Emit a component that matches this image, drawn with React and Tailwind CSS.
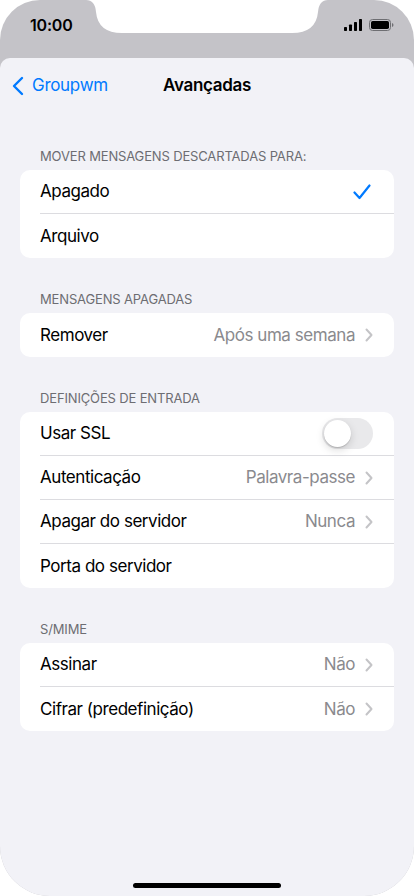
import React from "react";

const font = { fontFamily: "Inter, 'Noto Sans', sans-serif" };

function Chevron() {
  return (
    <svg width="8" height="14" viewBox="0 0 8 14" className="ml-[10px]">
      <path d="M1.5 1.5 L6.5 7 L1.5 12.5" fill="none" stroke="#c4c4c7" strokeWidth="2" strokeLinecap="round" strokeLinejoin="round" />
    </svg>
  );
}

function Row({ label, value, chevron, last, right }) {
  return (
    <div className="flex h-[44px] pl-[20px]">
      <div className={"flex flex-1 items-center pr-[21px] " + (last ? "" : "border-b border-[#dcdce0]")}>
        <span className="flex-1 text-[17px] text-black tracking-[-0.45px] pt-[1px]">{label}</span>
        {value && <span className="text-[17px] text-[#8a8a8e] tracking-[-0.45px] pt-[1px]">{value}</span>}
        {chevron && <Chevron />}
        {right}
      </div>
    </div>
  );
}

function Header({ children, first }) {
  return (
    <div className={(first ? "mt-[39px]" : "mt-[32px]") + " px-[40px] pb-[5px] text-[13px] leading-[18px] text-[#6d6d72] uppercase tracking-[-0.15px]"}>
      {children}
    </div>
  );
}

function Card({ children }) {
  return <div className="mx-[20px] bg-white rounded-[10px] overflow-hidden">{children}</div>;
}

export default function App() {
  return (
    <div className="w-[414px] h-[896px] bg-white overflow-hidden" style={font}>
      <div className="relative w-[414px] h-[896px] bg-[#c4c3c8] rounded-t-[40px] rounded-b-[50px] overflow-hidden flex flex-col">
        {/* notch */}
        <svg className="absolute top-0 left-0" width="414" height="40" viewBox="0 0 414 40">
          <path d="M86 0 Q95 0 96 12 Q98 33 122 33 L292 33 Q316 33 318 12 Q319 0 328 0 Z" fill="#ffffff" />
        </svg>
        {/* status bar */}
        <div className="h-[58px] flex items-start justify-between px-[30px] pt-[14px] shrink-0">
          <span className="text-[16px] font-semibold text-black tracking-[-0.2px] leading-[22px]">10:00</span>
          <div className="flex items-center gap-[7px] mt-[5px] mr-[-10px]">
            <svg width="18" height="12" viewBox="0 0 18 12">
              <rect x="0" y="8" width="3" height="4" rx="0.7" fill="#000" />
              <rect x="5" y="5.5" width="3" height="6.5" rx="0.7" fill="#000" />
              <rect x="10" y="3" width="3" height="9" rx="0.7" fill="#000" />
              <rect x="15" y="0" width="3" height="12" rx="0.7" fill="#000" />
            </svg>
            <svg width="25" height="12" viewBox="0 0 25 12">
              <rect x="0.5" y="0.5" width="21" height="11" rx="3" fill="none" stroke="#6e6e72" strokeWidth="1" />
              <rect x="2" y="2" width="18" height="8" rx="1.7" fill="#000" />
              <path d="M23 4 Q24.5 4.5 24.5 6 Q24.5 7.5 23 8 Z" fill="#6e6e72" />
            </svg>
          </div>
        </div>
        {/* sheet */}
        <div className="flex-1 bg-[#f2f2f7] rounded-t-[10px] pt-[6px] flex flex-col">
          <div className="relative h-[44px] flex items-center justify-center shrink-0">
            <div className="absolute left-[12px] top-0 h-[44px] flex items-center">
              <svg width="12" height="20" viewBox="0 0 12 20">
                <path d="M10 2 L2 10 L10 18" fill="none" stroke="#007aff" strokeWidth="2.4" strokeLinecap="round" strokeLinejoin="round" />
              </svg>
              <span className="ml-[8px] text-[17px] text-[#007aff] tracking-[-0.3px]">Groupwm</span>
            </div>
            <span className="text-[17px] font-semibold text-black tracking-[-0.3px]">Avançadas</span>
          </div>

          <Header first>Mover mensagens descartadas para:</Header>
          <Card>
            <Row
              label="Apagado"
              right={
                <svg width="18" height="16" viewBox="0 0 18 16" className="mr-[2px]">
                  <path d="M1.5 8.5 L6.5 14 L16.5 1.5" fill="none" stroke="#007aff" strokeWidth="2.2" strokeLinecap="round" strokeLinejoin="round" />
                </svg>
              }
            />
            <Row label="Arquivo" last />
          </Card>

          <Header>Mensagens apagadas</Header>
          <Card>
            <Row label="Remover" value="Após uma semana" chevron last />
          </Card>

          <Header>Definições de entrada</Header>
          <Card>
            <Row
              label="Usar SSL"
              right={
                <div className="w-[51px] h-[31px] rounded-full bg-[#e9e9eb] p-[2px] flex items-center">
                  <div className="w-[27px] h-[27px] rounded-full bg-white shadow-[0_3px_8px_rgba(0,0,0,0.15),0_1px_1px_rgba(0,0,0,0.16)]" />
                </div>
              }
            />
            <Row label="Autenticação" value="Palavra-passe" chevron />
            <Row label="Apagar do servidor" value="Nunca" chevron />
            <Row label="Porta do servidor" last />
          </Card>

          <Header>S/MIME</Header>
          <Card>
            <Row label="Assinar" value="Não" chevron />
            <Row label="Cifrar (predefinição)" value="Não" chevron last />
          </Card>

          <div className="flex-1" />
          <div className="flex justify-center pb-[8px]">
            <div className="w-[148px] h-[5px] rounded-full bg-black" />
          </div>
        </div>
      </div>
    </div>
  );
}
